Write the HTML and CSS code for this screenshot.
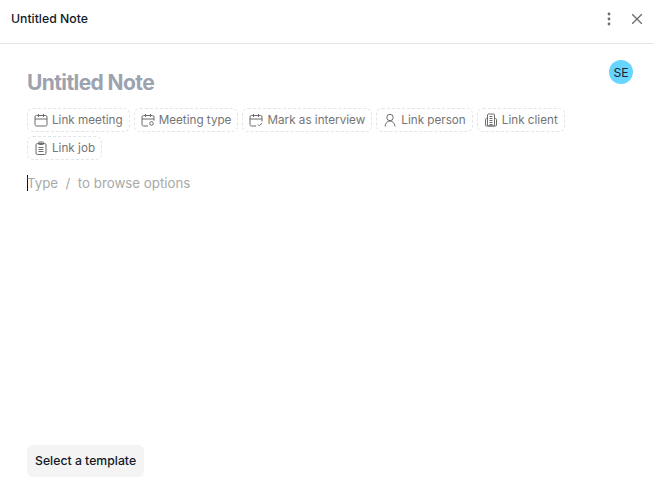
FILE: index.html
```html
<!DOCTYPE html>
<html lang="en">
  <head>
    <meta charset="UTF-8" />
    <title>Untitled Note</title>
    <link rel="stylesheet" href="styles.css">
  </head>
  <body>
    <div class="note">
      <header class="topbar">
        <span class="topbar-title">Untitled Note</span>
        <div class="topbar-actions">
          <svg class="icon-btn" width="16" height="16" viewBox="0 0 16 16" fill="#6b6b6b">
            <circle cx="8" cy="3" r="1.4" />
            <circle cx="8" cy="8" r="1.4" />
            <circle cx="8" cy="13" r="1.4" />
          </svg>
          <svg class="icon-btn" width="16" height="16" viewBox="0 0 16 16" fill="none" stroke="#6b6b6b" stroke-width="1.3">
            <path d="M3.2 3.2l9.6 9.6M12.8 3.2l-9.6 9.6" />
          </svg>
        </div>
      </header>

      <main class="body">
        <div class="title-row">
          <h1 class="title">Untitled Note</h1>
          <div class="avatar">SE</div>
        </div>

        <div class="chips">
          <div class="chip">
            <svg class="chip-icon" viewBox="0 0 14 14"><rect x="1" y="2.500" width="12" height="10.500" rx="1.500" /><path d="M1 6h12M4.500 1v3M9.500 1v3" /></svg>
            Link meeting
          </div>
          <div class="chip">
            <svg class="chip-icon" viewBox="0 0 14 14"><path d="M7 13H2.500A1.500 1.500 0 0 1 1 11.500V4a1.500 1.500 0 0 1 1.500-1.500h9A1.500 1.500 0 0 1 13 4v3.500M1 6h12M4.500 1v3M9.500 1v3" /><circle cx="10.500" cy="10.500" r="1.800" /></svg>
            Meeting type
          </div>
          <div class="chip">
            <svg class="chip-icon" viewBox="0 0 14 14"><path d="M7 13H2.500A1.500 1.500 0 0 1 1 11.500V4a1.500 1.500 0 0 1 1.500-1.500h9A1.500 1.500 0 0 1 13 4v4.500M1 6h12M4.500 1v3M9.500 1v3M9 11.500l1.300 1.300 2.700-2.600" /></svg>
            Mark as interview
          </div>
          <div class="chip">
            <svg class="chip-icon" viewBox="0 0 14 14"><circle cx="7" cy="4.500" r="3.200" /><path d="M2 13.500c.3-3.300 2.300-5.500 5-5.500s4.700 2.200 5 5.500" /></svg>
            Link person
          </div>
          <div class="chip">
            <svg class="chip-icon" viewBox="0 0 14 14"><rect x="3.500" y="1" width="7" height="12" rx="1" /><path d="M3.500 5.500h-1a1 1 0 0 0-1 1V12a1 1 0 0 0 1 1h9a1 1 0 0 0 1-1V6.500a1 1 0 0 0-1-1h-1M5.500 3.500h3M5.500 5.500h3M5.500 7.500h3M5.500 9.500h3M5.500 11.500h3" /></svg>
            Link client
          </div>
          <div class="chip">
            <svg class="chip-icon" viewBox="0 0 14 14"><rect x="2" y="2.500" width="10" height="11" rx="1.500" /><rect x="4.500" y="1" width="5" height="2.500" rx=".7" /><path d="M4.500 6.500h5M4.500 8.500h5M4.500 10.500h5" /></svg>
            Link job
          </div>
        </div>

        <div class="editor">
          <span class="caret"></span>
          <span class="placeholder">Type &nbsp;/&nbsp; to browse options</span>
        </div>
      </main>

      <footer class="footer">
        <button class="template-btn">Select a template</button>
      </footer>
    </div>
  </body>
</html>
```

FILE: styles.css
```css
html,
body {
  height: 100%;
}

body {
  margin: 0;
  background: white;
  font-family: Inter, "Liberation Sans", sans-serif;
  overflow: hidden;
}

.note {
  display: flex;
  flex-direction: column;
  height: 100%;
}

.topbar {
  display: flex;
  justify-content: space-between;
  align-items: center;
  flex: none;
  box-sizing: border-box;
  height: 44px;
  padding: 0 9px 6px 11px;
  border-bottom: 1px solid #e2e4e8;
}

.topbar-title {
  font-size: 12.250px;
  font-weight: 500;
  color: #111827;
}

.topbar-actions {
  display: flex;
  gap: 12px;
}

.icon-btn {
  display: block;
}

.body {
  flex: 1;
  padding: 16px 21px 0 27px;
}

.title-row {
  display: flex;
  justify-content: space-between;
  align-items: flex-start;
}

.title {
  margin: 8px 0 0;
  font-size: 21px;
  line-height: 30px;
  font-weight: 700;
  letter-spacing: -0.600px;
  color: #9ca3af;
}

.avatar {
  display: flex;
  justify-content: center;
  align-items: center;
  width: 24px;
  height: 24px;
  border-radius: 50%;
  background: #67d5ff;
  color: #1a2433;
  font-size: 12.250px;
}

.chips {
  display: flex;
  flex-wrap: wrap;
  gap: 4px;
  margin-top: 10px;
  max-width: 560px;
}

.chip {
  display: flex;
  align-items: center;
  gap: 4px;
  height: 24px;
  box-sizing: border-box;
  padding: 0 6px;
  border: 1px dashed #e1e4e8;
  border-radius: 6px;
  font-size: 11.700px;
  color: #757575;
}

.chip-icon {
  width: 14px;
  height: 14px;
  fill: none;
  stroke: #6b6b6b;
  stroke-width: 1;
}

.editor {
  display: flex;
  align-items: center;
  height: 20px;
  margin-top: 13px;
}

.caret {
  width: 1px;
  height: 16px;
  margin-right: -1px;
  background: #111;
}

.placeholder {
  font-size: 13.300px;
  color: #a9a9a9;
}

.footer {
  flex: none;
  padding: 0 27px 1px;
}

.template-btn {
  display: block;
  height: 32px;
  padding: 0 8px 2px;
  border: none;
  border-radius: 6px;
  background: #f4f4f4;
  font-family: inherit;
  font-size: 12.250px;
  font-weight: 500;
  color: #111827;
}
```
